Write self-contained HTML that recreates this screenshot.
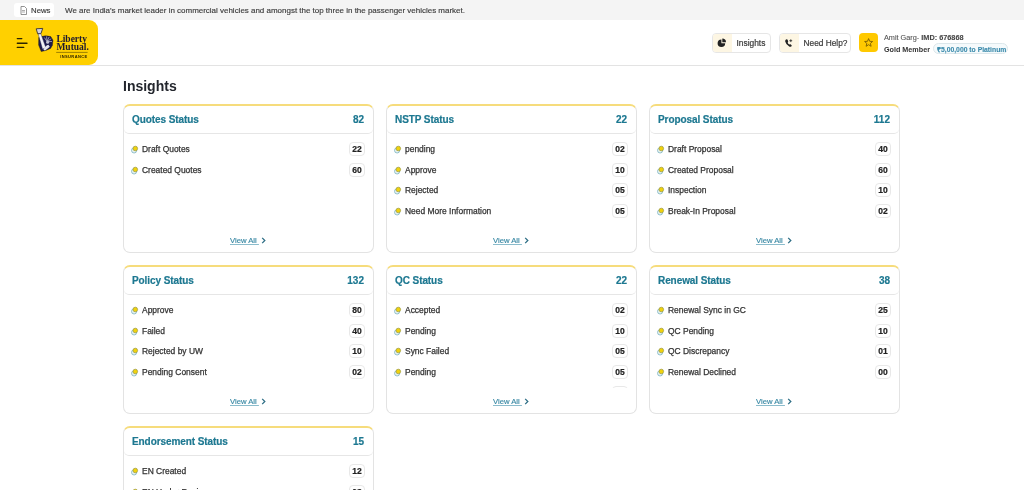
<!DOCTYPE html>
<html><head><meta charset="utf-8">
<style>
*{box-sizing:border-box;margin:0;padding:0}
html,body{width:1024px;height:490px;overflow:hidden;background:#fff;font-family:"Liberation Sans",sans-serif;color:#333}
.news{position:absolute;left:0;top:0;width:1024px;height:20px;background:#f4f4f4}
.newspill{position:absolute;left:14px;top:3px;width:40px;height:14px;background:#fff;border-radius:3px}
.newspill svg{position:absolute;left:6px;top:3px}
.newspill span{position:absolute;left:17px;top:2.5px;font-size:7.8px;color:#3a3a3a;-webkit-text-stroke:.15px #3a3a3a}
.newstext{position:absolute;left:65px;top:5.5px;font-size:8px;color:#3c3c3c;-webkit-text-stroke:.15px #3c3c3c;letter-spacing:-.015px;white-space:nowrap}
.header{position:absolute;left:0;top:20px;width:1024px;height:46px;background:#fff;border-bottom:1px solid #e3e3e3}
.logo{position:absolute;left:0;top:0;width:98px;height:45px;background:#ffd000;border-radius:0 9px 9px 0}
.logo svg{position:absolute;left:0;top:0}
.btn{position:absolute;top:13px;height:20px;border:1px solid #e6e6e6;border-radius:4px;background:#fff;overflow:hidden}
.btn .ic{position:absolute;left:0;top:0;width:19px;height:18px;background:#fdf6e3}
.btn .ic svg{position:absolute;left:0;top:0}
.btn span{position:absolute;top:4px;font-size:8px;color:#3a3a3a;-webkit-text-stroke:.2px #3a3a3a;white-space:nowrap}
.star{position:absolute;left:859px;top:13px;width:19px;height:19px;background:#ffc900;border-radius:4px}
.star svg{position:absolute;left:0;top:0}
.uname{position:absolute;left:884px;top:13px;font-size:7.3px;color:#555;-webkit-text-stroke:.1px #555;white-space:nowrap}
.uname b{color:#444}
.gold{position:absolute;left:884px;top:25px;font-size:7.2px;font-weight:700;color:#333;white-space:nowrap}
.plat{position:absolute;left:933px;top:23px;width:75px;height:11px;border:1px solid #dce7eb;border-radius:6px;background:#f5fafc}
.plat span{position:absolute;left:3px;top:1px;font-size:6.8px;font-weight:700;color:#3a8aab;-webkit-text-stroke:.1px #3a8aab;white-space:nowrap}
h1{position:absolute;left:123px;top:78px;font-size:14px;font-weight:700;color:#23262d}
.card{position:absolute;width:251px;height:149px;border:1px solid #e3e3e3;border-top:2px solid #f6dc7c;border-radius:7px;background:#fff;overflow:hidden}
.ch{position:absolute;left:0;top:0;right:0;height:28px;border-bottom:1px solid #e6e6e6;border-radius:0 0 5px 5px}
.ct{position:absolute;left:8px;top:8px;font-size:10px;letter-spacing:-.08px;font-weight:700;color:#1d7891;-webkit-text-stroke:.2px #1d7891;white-space:nowrap}
.cn{position:absolute;right:9px;top:8px;font-size:10px;font-weight:700;color:#1d7891;-webkit-text-stroke:.2px #1d7891}
.list{position:absolute;left:0;right:0;top:32.5px;height:88.5px;overflow:hidden}
.row{position:absolute;left:7px;right:8px;height:16px}
.dot{position:absolute;left:0;top:2px;width:9px;height:9px}
.lbl{position:absolute;left:11px;top:1.5px;font-size:8.45px;color:#333;-webkit-text-stroke:.25px #333;white-space:nowrap}
.bd{position:absolute;right:0;top:-1px;width:16px;height:14px;border:1px solid #e8e8e8;border-radius:4px;font-size:8.5px;font-weight:700;color:#222;-webkit-text-stroke:.2px #222;text-align:center;line-height:12px}
.va{position:absolute;left:106px;top:130px;font-size:7.7px;color:#2b7a99;white-space:nowrap}
.va u{text-decoration:underline;text-decoration-color:#8bbccc;text-underline-offset:1px;color:#3787a3;-webkit-text-stroke:.15px #3787a3}
.chev{position:absolute;left:31px;top:1px}
</style></head><body><div id="root" style="position:absolute;left:0;top:0;width:1024px;height:490px;will-change:transform">
<div class="news">
  <div class="newspill"><svg width="7" height="9" viewBox="0 0 7 9"><path d="M1 .5h3.5L6.5 2.5V8.5H1z" fill="none" stroke="#777" stroke-width=".8"/><path d="M2 4.5h3M2 6h3" stroke="#777" stroke-width=".6"/></svg><span>News</span></div>
  <div class="newstext">We are India's market leader in commercial vehicles and amongst the top three in the passenger vehicles market.</div>
</div>
<div class="header">
  <div class="logo"><svg width="98" height="45" viewBox="0 0 98 45">
<g stroke="#2b2300" stroke-width="1.35" stroke-linecap="round"><path d="M17.3 18.6H21.8M17.3 23.2H27M17.3 27.4H23.7"/></g>
<path d="M38.7 17.6Q45 14.4 50.8 16.6L53 20.2L52.4 25.2L50.6 28.4Q46 30.8 41.2 31.6L38.6 25Z" fill="#1d1b4c" stroke="#231d10" stroke-width=".4"/>
<path d="M36.2 8.8L42.7 8.4L41 13.5L37.7 13.8Z" fill="#d4d4dc" stroke="#1d1b30" stroke-width=".8"/>
<path d="M38.2 14L40.9 13.8L45.8 27.6L42.6 29.2Z" fill="#f2f2f6" stroke="#1d1b4c" stroke-width=".4"/>
<path d="M47 21.5L44.4 17.6M47 21.5L46.6 16.4M47 21.5L49.2 16.9M47 21.5L51.2 18.8M47 21.5L52 21.5" stroke="#dcdce8" stroke-width=".6"/>
<circle cx="47.6" cy="22.3" r="1.5" fill="#c4c4d4"/>
<path d="M43.4 29.8Q45.4 25.6 48.4 24.8L49.8 26.8Q47.4 28.8 45 30.6Z" fill="#e4e4ee"/>
<text x="56.4" y="22" font-family="Liberation Serif" font-weight="700" font-size="9.5" fill="#1f1a2e">Liberty</text>
<text x="56.4" y="30.1" font-family="Liberation Serif" font-weight="700" font-size="9.5" fill="#1f1a2e">Mutual.</text>
<path d="M56.2 32.4H87.6" stroke="#3a3000" stroke-width=".5"/>
<text x="60.2" y="37.7" font-family="Liberation Sans" font-weight="700" font-size="4" letter-spacing=".4" fill="#2a2200">INSURANCE</text>
</svg></div>
  <div class="btn" style="left:712px;width:59px"><div class="ic"><svg width="19" height="18" viewBox="0 0 19 18"><path d="M8.4 5.4A3.8 3.8 0 1 0 12.2 9.2H8.4Z" fill="#222"/><path d="M9.3 4.6A3.8 3.8 0 0 1 13 8.3H9.3Z" fill="#222"/></svg></div><span style="left:23.5px;font-size:8.4px;top:3.6px">Insights</span></div>
  <div class="btn" style="left:779px;width:72px"><div class="ic"><svg width="19" height="18" viewBox="0 0 19 18"><path d="M6 5.6Q6.8 5 7.4 5.6L8.2 7.2Q8.3 7.8 7.7 8.2Q7.9 9.8 9.4 10.6Q9.9 10 10.5 10.2L11.6 11.2Q12 11.8 11.3 12.4Q10.5 13 9.2 12.5Q6 11 5.2 7.6Q5.1 6.3 6 5.6Z" fill="#222"/><path d="M10.8 5.3V8.1M9.4 6.7H12.2" stroke="#222" stroke-width=".8"/></svg></div><span style="left:23.6px;font-size:8.3px;top:3.7px">Need Help?</span></div>
  <div class="star"><svg width="19" height="19" viewBox="0 0 19 19"><path d="M9.6 5.6L10.7 8.3L13.6 8.5L11.4 10.4L12.1 13.3L9.6 11.7L7.1 13.3L7.8 10.4L5.6 8.5L8.5 8.3Z" fill="none" stroke="#7a5c00" stroke-width=".9" stroke-linejoin="round"/></svg></div>
  <div class="uname">Amit Garg- <b>IMD: 676868</b></div>
  <div class="gold">Gold Member</div>
  <div class="plat"><span>₹5,00,000 to Platinum</span></div>
</div>
<h1>Insights</h1>
<div id="cards"><div class="card" style="left:123px;top:104px"><div class="ch"><div class="ct">Quotes Status</div><div class="cn">82</div></div><div class="list"><div class="row" style="top:4px"><svg class="dot" viewBox="0 0 9 9" width="9" height="9"><circle cx="3.1" cy="5.4" r="2.6" fill="#e6f1f1" stroke="#7fb5c2" stroke-width=".8"/><circle cx="4.3" cy="3.5" r="2.3" fill="#f0d20e" stroke="#98963e" stroke-width=".7"/></svg><div class="lbl">Draft Quotes</div><div class="bd">22</div></div><div class="row" style="top:25px"><svg class="dot" viewBox="0 0 9 9" width="9" height="9"><circle cx="3.1" cy="5.4" r="2.6" fill="#e6f1f1" stroke="#7fb5c2" stroke-width=".8"/><circle cx="4.3" cy="3.5" r="2.3" fill="#f0d20e" stroke="#98963e" stroke-width=".7"/></svg><div class="lbl" style="top:1px">Created Quotes</div><div class="bd">60</div></div></div><div class="va"><u>View All&nbsp;</u><svg class="chev" width="5" height="7" viewBox="0 0 5 7"><path d="M1.2 .9L3.8 3.5L1.2 6.1" fill="none" stroke="#2f6f86" stroke-width="1.3"/></svg></div></div>
<div class="card" style="left:386px;top:104px"><div class="ch"><div class="ct">NSTP Status</div><div class="cn">22</div></div><div class="list"><div class="row" style="top:4px"><svg class="dot" viewBox="0 0 9 9" width="9" height="9"><circle cx="3.1" cy="5.4" r="2.6" fill="#e6f1f1" stroke="#7fb5c2" stroke-width=".8"/><circle cx="4.3" cy="3.5" r="2.3" fill="#f0d20e" stroke="#98963e" stroke-width=".7"/></svg><div class="lbl">pending</div><div class="bd">02</div></div><div class="row" style="top:25px"><svg class="dot" viewBox="0 0 9 9" width="9" height="9"><circle cx="3.1" cy="5.4" r="2.6" fill="#e6f1f1" stroke="#7fb5c2" stroke-width=".8"/><circle cx="4.3" cy="3.5" r="2.3" fill="#f0d20e" stroke="#98963e" stroke-width=".7"/></svg><div class="lbl" style="top:1px">Approve</div><div class="bd">10</div></div><div class="row" style="top:45px"><svg class="dot" viewBox="0 0 9 9" width="9" height="9"><circle cx="3.1" cy="5.4" r="2.6" fill="#e6f1f1" stroke="#7fb5c2" stroke-width=".8"/><circle cx="4.3" cy="3.5" r="2.3" fill="#f0d20e" stroke="#98963e" stroke-width=".7"/></svg><div class="lbl">Rejected</div><div class="bd">05</div></div><div class="row" style="top:66px"><svg class="dot" viewBox="0 0 9 9" width="9" height="9"><circle cx="3.1" cy="5.4" r="2.6" fill="#e6f1f1" stroke="#7fb5c2" stroke-width=".8"/><circle cx="4.3" cy="3.5" r="2.3" fill="#f0d20e" stroke="#98963e" stroke-width=".7"/></svg><div class="lbl">Need More Information</div><div class="bd">05</div></div></div><div class="va"><u>View All&nbsp;</u><svg class="chev" width="5" height="7" viewBox="0 0 5 7"><path d="M1.2 .9L3.8 3.5L1.2 6.1" fill="none" stroke="#2f6f86" stroke-width="1.3"/></svg></div></div>
<div class="card" style="left:649px;top:104px"><div class="ch"><div class="ct">Proposal Status</div><div class="cn">112</div></div><div class="list"><div class="row" style="top:4px"><svg class="dot" viewBox="0 0 9 9" width="9" height="9"><circle cx="3.1" cy="5.4" r="2.6" fill="#e6f1f1" stroke="#7fb5c2" stroke-width=".8"/><circle cx="4.3" cy="3.5" r="2.3" fill="#f0d20e" stroke="#98963e" stroke-width=".7"/></svg><div class="lbl">Draft Proposal</div><div class="bd">40</div></div><div class="row" style="top:25px"><svg class="dot" viewBox="0 0 9 9" width="9" height="9"><circle cx="3.1" cy="5.4" r="2.6" fill="#e6f1f1" stroke="#7fb5c2" stroke-width=".8"/><circle cx="4.3" cy="3.5" r="2.3" fill="#f0d20e" stroke="#98963e" stroke-width=".7"/></svg><div class="lbl" style="top:1px">Created Proposal</div><div class="bd">60</div></div><div class="row" style="top:45px"><svg class="dot" viewBox="0 0 9 9" width="9" height="9"><circle cx="3.1" cy="5.4" r="2.6" fill="#e6f1f1" stroke="#7fb5c2" stroke-width=".8"/><circle cx="4.3" cy="3.5" r="2.3" fill="#f0d20e" stroke="#98963e" stroke-width=".7"/></svg><div class="lbl">Inspection</div><div class="bd">10</div></div><div class="row" style="top:66px"><svg class="dot" viewBox="0 0 9 9" width="9" height="9"><circle cx="3.1" cy="5.4" r="2.6" fill="#e6f1f1" stroke="#7fb5c2" stroke-width=".8"/><circle cx="4.3" cy="3.5" r="2.3" fill="#f0d20e" stroke="#98963e" stroke-width=".7"/></svg><div class="lbl">Break-In Proposal</div><div class="bd">02</div></div></div><div class="va"><u>View All&nbsp;</u><svg class="chev" width="5" height="7" viewBox="0 0 5 7"><path d="M1.2 .9L3.8 3.5L1.2 6.1" fill="none" stroke="#2f6f86" stroke-width="1.3"/></svg></div></div>
<div class="card" style="left:123px;top:265px"><div class="ch"><div class="ct">Policy Status</div><div class="cn">132</div></div><div class="list"><div class="row" style="top:4px"><svg class="dot" viewBox="0 0 9 9" width="9" height="9"><circle cx="3.1" cy="5.4" r="2.6" fill="#e6f1f1" stroke="#7fb5c2" stroke-width=".8"/><circle cx="4.3" cy="3.5" r="2.3" fill="#f0d20e" stroke="#98963e" stroke-width=".7"/></svg><div class="lbl">Approve</div><div class="bd">80</div></div><div class="row" style="top:25px"><svg class="dot" viewBox="0 0 9 9" width="9" height="9"><circle cx="3.1" cy="5.4" r="2.6" fill="#e6f1f1" stroke="#7fb5c2" stroke-width=".8"/><circle cx="4.3" cy="3.5" r="2.3" fill="#f0d20e" stroke="#98963e" stroke-width=".7"/></svg><div class="lbl" style="top:1px">Failed</div><div class="bd">40</div></div><div class="row" style="top:45px"><svg class="dot" viewBox="0 0 9 9" width="9" height="9"><circle cx="3.1" cy="5.4" r="2.6" fill="#e6f1f1" stroke="#7fb5c2" stroke-width=".8"/><circle cx="4.3" cy="3.5" r="2.3" fill="#f0d20e" stroke="#98963e" stroke-width=".7"/></svg><div class="lbl">Rejected by UW</div><div class="bd">10</div></div><div class="row" style="top:66px"><svg class="dot" viewBox="0 0 9 9" width="9" height="9"><circle cx="3.1" cy="5.4" r="2.6" fill="#e6f1f1" stroke="#7fb5c2" stroke-width=".8"/><circle cx="4.3" cy="3.5" r="2.3" fill="#f0d20e" stroke="#98963e" stroke-width=".7"/></svg><div class="lbl">Pending Consent</div><div class="bd">02</div></div></div><div class="va"><u>View All&nbsp;</u><svg class="chev" width="5" height="7" viewBox="0 0 5 7"><path d="M1.2 .9L3.8 3.5L1.2 6.1" fill="none" stroke="#2f6f86" stroke-width="1.3"/></svg></div></div>
<div class="card" style="left:386px;top:265px"><div class="ch"><div class="ct">QC Status</div><div class="cn">22</div></div><div class="list"><div class="row" style="top:4px"><svg class="dot" viewBox="0 0 9 9" width="9" height="9"><circle cx="3.1" cy="5.4" r="2.6" fill="#e6f1f1" stroke="#7fb5c2" stroke-width=".8"/><circle cx="4.3" cy="3.5" r="2.3" fill="#f0d20e" stroke="#98963e" stroke-width=".7"/></svg><div class="lbl">Accepted</div><div class="bd">02</div></div><div class="row" style="top:25px"><svg class="dot" viewBox="0 0 9 9" width="9" height="9"><circle cx="3.1" cy="5.4" r="2.6" fill="#e6f1f1" stroke="#7fb5c2" stroke-width=".8"/><circle cx="4.3" cy="3.5" r="2.3" fill="#f0d20e" stroke="#98963e" stroke-width=".7"/></svg><div class="lbl" style="top:1px">Pending</div><div class="bd">10</div></div><div class="row" style="top:45px"><svg class="dot" viewBox="0 0 9 9" width="9" height="9"><circle cx="3.1" cy="5.4" r="2.6" fill="#e6f1f1" stroke="#7fb5c2" stroke-width=".8"/><circle cx="4.3" cy="3.5" r="2.3" fill="#f0d20e" stroke="#98963e" stroke-width=".7"/></svg><div class="lbl">Sync Failed</div><div class="bd">05</div></div><div class="row" style="top:66px"><svg class="dot" viewBox="0 0 9 9" width="9" height="9"><circle cx="3.1" cy="5.4" r="2.6" fill="#e6f1f1" stroke="#7fb5c2" stroke-width=".8"/><circle cx="4.3" cy="3.5" r="2.3" fill="#f0d20e" stroke="#98963e" stroke-width=".7"/></svg><div class="lbl">Pending</div><div class="bd">05</div></div><div class="row" style="top:87px"><svg class="dot" viewBox="0 0 9 9" width="9" height="9"><circle cx="3.1" cy="5.4" r="2.6" fill="#e6f1f1" stroke="#7fb5c2" stroke-width=".8"/><circle cx="4.3" cy="3.5" r="2.3" fill="#f0d20e" stroke="#98963e" stroke-width=".7"/></svg><div class="lbl">Rejected</div><div class="bd">01</div></div></div><div class="va"><u>View All&nbsp;</u><svg class="chev" width="5" height="7" viewBox="0 0 5 7"><path d="M1.2 .9L3.8 3.5L1.2 6.1" fill="none" stroke="#2f6f86" stroke-width="1.3"/></svg></div></div>
<div class="card" style="left:649px;top:265px"><div class="ch"><div class="ct">Renewal Status</div><div class="cn">38</div></div><div class="list"><div class="row" style="top:4px"><svg class="dot" viewBox="0 0 9 9" width="9" height="9"><circle cx="3.1" cy="5.4" r="2.6" fill="#e6f1f1" stroke="#7fb5c2" stroke-width=".8"/><circle cx="4.3" cy="3.5" r="2.3" fill="#f0d20e" stroke="#98963e" stroke-width=".7"/></svg><div class="lbl">Renewal Sync in GC</div><div class="bd">25</div></div><div class="row" style="top:25px"><svg class="dot" viewBox="0 0 9 9" width="9" height="9"><circle cx="3.1" cy="5.4" r="2.6" fill="#e6f1f1" stroke="#7fb5c2" stroke-width=".8"/><circle cx="4.3" cy="3.5" r="2.3" fill="#f0d20e" stroke="#98963e" stroke-width=".7"/></svg><div class="lbl" style="top:1px">QC Pending</div><div class="bd">10</div></div><div class="row" style="top:45px"><svg class="dot" viewBox="0 0 9 9" width="9" height="9"><circle cx="3.1" cy="5.4" r="2.6" fill="#e6f1f1" stroke="#7fb5c2" stroke-width=".8"/><circle cx="4.3" cy="3.5" r="2.3" fill="#f0d20e" stroke="#98963e" stroke-width=".7"/></svg><div class="lbl">QC Discrepancy</div><div class="bd">01</div></div><div class="row" style="top:66px"><svg class="dot" viewBox="0 0 9 9" width="9" height="9"><circle cx="3.1" cy="5.4" r="2.6" fill="#e6f1f1" stroke="#7fb5c2" stroke-width=".8"/><circle cx="4.3" cy="3.5" r="2.3" fill="#f0d20e" stroke="#98963e" stroke-width=".7"/></svg><div class="lbl">Renewal Declined</div><div class="bd">00</div></div></div><div class="va"><u>View All&nbsp;</u><svg class="chev" width="5" height="7" viewBox="0 0 5 7"><path d="M1.2 .9L3.8 3.5L1.2 6.1" fill="none" stroke="#2f6f86" stroke-width="1.3"/></svg></div></div>
<div class="card" style="left:123px;top:426px"><div class="ch"><div class="ct">Endorsement Status</div><div class="cn">15</div></div><div class="list"><div class="row" style="top:4px"><svg class="dot" viewBox="0 0 9 9" width="9" height="9"><circle cx="3.1" cy="5.4" r="2.6" fill="#e6f1f1" stroke="#7fb5c2" stroke-width=".8"/><circle cx="4.3" cy="3.5" r="2.3" fill="#f0d20e" stroke="#98963e" stroke-width=".7"/></svg><div class="lbl">EN Created</div><div class="bd">12</div></div><div class="row" style="top:25px"><svg class="dot" viewBox="0 0 9 9" width="9" height="9"><circle cx="3.1" cy="5.4" r="2.6" fill="#e6f1f1" stroke="#7fb5c2" stroke-width=".8"/><circle cx="4.3" cy="3.5" r="2.3" fill="#f0d20e" stroke="#98963e" stroke-width=".7"/></svg><div class="lbl" style="top:1px">EN Under Review</div><div class="bd">03</div></div></div><div class="va"><u>View All&nbsp;</u><svg class="chev" width="5" height="7" viewBox="0 0 5 7"><path d="M1.2 .9L3.8 3.5L1.2 6.1" fill="none" stroke="#2f6f86" stroke-width="1.3"/></svg></div></div></div><!--/cards-->
</div></body></html>
